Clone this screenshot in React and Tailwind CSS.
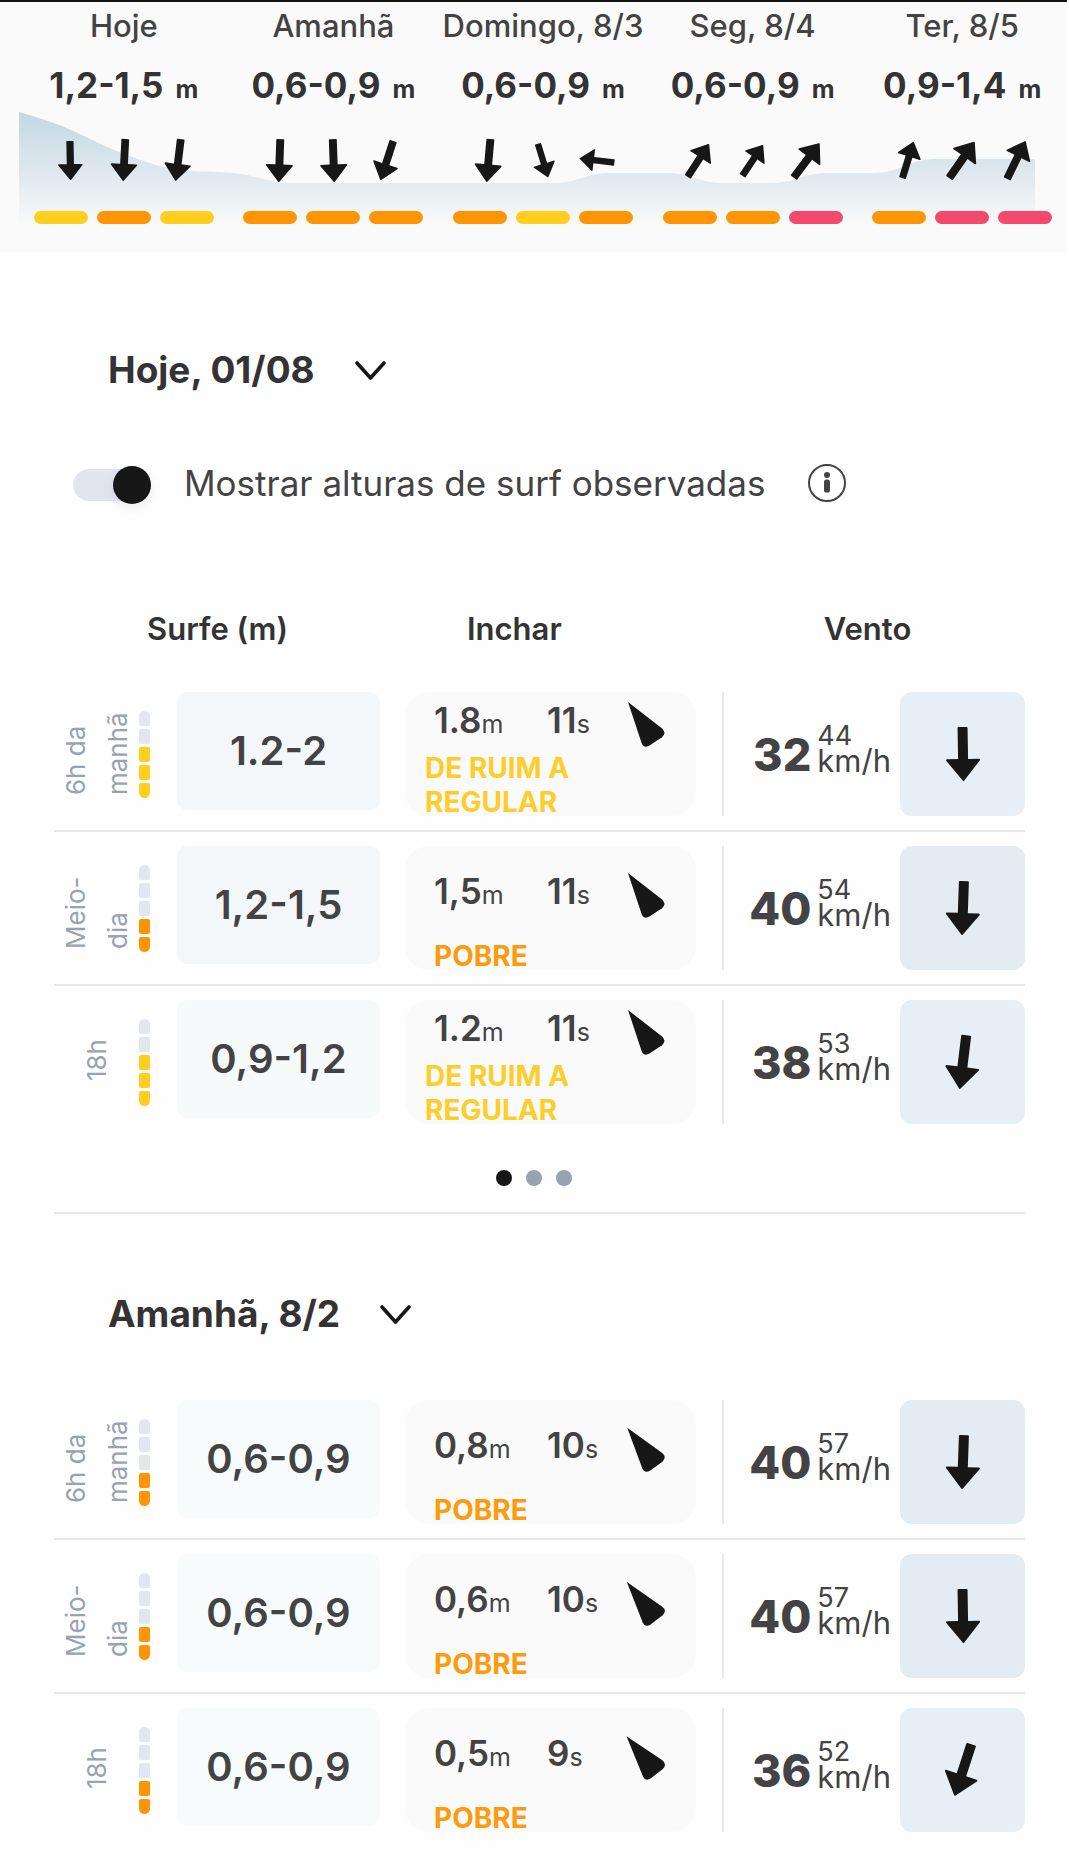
import { useState } from "react";

const COLORS = {
  yellow: { bg: "bg-[#ffce1f]", text: "text-[#fdcd2b]" },
  orange: { bg: "bg-[#ff9500]", text: "text-[#fc9a10]" },
  pink: { bg: "bg-[#f4496d]", text: "text-[#f4496d]" },
};

const DAYS = [
  {
    label: "Hoje",
    range: "1,2-1,5",
    winds: [[39, -1], [42, 3], [42, 7]],
    ratings: ["yellow", "orange", "yellow"],
  },
  {
    label: "Amanhã",
    range: "0,6-0,9",
    winds: [[43, 2], [43, -2], [41, 18]],
    ratings: ["orange", "orange", "orange"],
  },
  {
    label: "Domingo, 8/3",
    range: "0,6-0,9",
    winds: [[43, 5], [35, -17], [35, 97]],
    ratings: ["orange", "yellow", "orange"],
  },
  {
    label: "Seg, 8/4",
    range: "0,6-0,9",
    winds: [[39, 213], [37, 214], [43, 217]],
    ratings: ["orange", "orange", "pink"],
  },
  {
    label: "Ter, 8/5",
    range: "0,9-1,4",
    winds: [[38, 197], [44, 215], [42, 206]],
    ratings: ["orange", "pink", "pink"],
  },
];

const TODAY = [
  { time: "6h da manhã", surf: "1.2-2", surfBg: "bg-[#f3f7fa]", swell: "1.8", period: "11", swellDir: 0, rating: "De ruim a regular", color: "yellow", score: 3, wind: 32, gust: 44, windDir: -1, windBg: "bg-[#e6eff5]" },
  { time: "Meio-dia", surf: "1,2-1,5", surfBg: "bg-[#f3f7fa]", swell: "1,5", period: "11", swellDir: 0, rating: "Pobre", color: "orange", score: 2, wind: 40, gust: 54, windDir: 2, windBg: "bg-[#e3ecf1]" },
  { time: "18h", surf: "0,9-1,2", surfBg: "bg-[#f7fafb]", swell: "1.2", period: "11", swellDir: 0, rating: "De ruim a regular", color: "yellow", score: 3, wind: 38, gust: 53, windDir: 7, windBg: "bg-[#e6eff5]" },
];

const TOMORROW = [
  { time: "6h da manhã", surf: "0,6-0,9", surfBg: "bg-[#f7fbfc]", swell: "0,8", period: "10", swellDir: -2, rating: "Pobre", color: "orange", score: 2, wind: 40, gust: 57, windDir: 2, windBg: "bg-[#e3ecf2]" },
  { time: "Meio-dia", surf: "0,6-0,9", surfBg: "bg-[#f7fbfc]", swell: "0,6", period: "10", swellDir: -3, rating: "Pobre", color: "orange", score: 2, wind: 40, gust: 57, windDir: -1, windBg: "bg-[#e3ecf2]" },
  { time: "18h", surf: "0,6-0,9", surfBg: "bg-[#f7fbfc]", swell: "0,5", period: "9", swellDir: -4, rating: "Pobre", color: "orange", score: 2, wind: 36, gust: 52, windDir: 18, windBg: "bg-[#e6eff5]" },
];

function WindArrow({ size, deg }) {
  return (
    <svg
      viewBox="0 0 34 54"
      height={size}
      className="shrink-0 overflow-visible fill-[#171717]"
      style={{ transform: `rotate(${deg}deg)` }}
      aria-hidden="true"
    >
      <path d="M13 0h8a1 1 0 0 1 1 1v31h11a1 1 0 0 1 .8 1.6L17.8 53.6a1 1 0 0 1-1.6 0L.2 33.6A1 1 0 0 1 1 32h11V1a1 1 0 0 1 1-1z" />
    </svg>
  );
}

function SwellArrow({ deg }) {
  return (
    <svg
      viewBox="0 0 37 45"
      className="mt-1.5 h-[45px] w-[37px] shrink-0 overflow-visible fill-[#171717]"
      style={{ transform: `rotate(${deg}deg)` }}
      aria-hidden="true"
    >
      <path d="M0 0L33.8 26.2Q39 30.5 34 35.2L21.5 43.6Q15.8 46.8 13.6 41z" />
    </svg>
  );
}

function Wave() {
  return (
    <svg
      viewBox="0 0 1016 116"
      preserveAspectRatio="none"
      className="absolute top-[108px] left-[19px] h-[116px] w-[calc(100%-51px)]"
      aria-hidden="true"
    >
      <defs>
        <linearGradient id="wave" gradientUnits="userSpaceOnUse" x1="0" y1="0" x2="0" y2="116">
          <stop offset="0" stopColor="#c1d7e1" />
          <stop offset="0.62" stopColor="#e3ebf0" />
          <stop offset="1" stopColor="#fafafa" />
        </linearGradient>
      </defs>
      <path
        fill="url(#wave)"
        d="M0 2C17 7 34 12 50 19C74 30 95 41 119 49C136 55 152 60 169 61C185 62 201 61 222 64C240 67 254 73 274 73H535C560 73 565 63 590 63H648C672 63 680 73 704 73H752C778 73 782 63 808 63H855C880 63 888 50 915 49H1016V116H0Z"
      />
    </svg>
  );
}

function DayColumn({ label, range, winds, ratings }) {
  return (
    <div className="flex flex-col items-center">
      <p className="text-[31px] leading-8 font-medium whitespace-nowrap text-[#434343]">{label}</p>
      <p className="mt-[23px] flex h-10 items-baseline gap-3 text-[35px] leading-10 font-bold whitespace-nowrap text-[#333]">
        {range} <span className="text-[25px] leading-none">m</span>
      </p>
      <div className="mt-[30px] flex h-[50px]">
        {winds.map(([size, deg], i) => (
          <span key={i} className="flex w-[54px] items-center justify-center">
            <WindArrow size={size} deg={deg} />
          </span>
        ))}
      </div>
      <div className="mt-[26px] flex w-full justify-center gap-[9px]">
        {ratings.map((rating, i) => (
          <span key={i} className={`h-[13px] w-[54px] rounded-full ${COLORS[rating].bg}`} />
        ))}
      </div>
    </div>
  );
}

function DayHeading({ children }) {
  return (
    <h2 className="ml-[108px] text-[37px] leading-[44px] font-bold text-[#333]">
      <button type="button" className="flex items-center gap-10">
        {children}
        <svg
          viewBox="0 0 31 19"
          className="h-[19px] w-[31px] fill-none stroke-[#171717] stroke-[3.6]"
          strokeLinecap="round"
          strokeLinejoin="round"
          aria-hidden="true"
        >
          <path d="M2 2l13.5 15L29 2" />
        </svg>
      </button>
    </h2>
  );
}

function ScoreBar({ score, color }) {
  return (
    <div className="flex flex-col gap-[3px] overflow-hidden rounded-full">
      {[5, 4, 3, 2, 1].map((n) => (
        <span key={n} className={`h-[15px] w-[11px] rounded-xs ${n <= score ? COLORS[color].bg : "bg-[#e3e6ee]"}`} />
      ))}
    </div>
  );
}

function ForecastRow({ row }) {
  const twoLines = row.rating.length > 10;
  return (
    <tr className="border-b-2 border-[#e7e8ec] last:border-b-0">
      <td className="py-[14px]">
        <div className="flex h-[124px] items-center">
          <div className="flex w-[85px] items-center justify-center pb-1">
            <span className="max-h-[86px] rotate-180 text-[26px] leading-[42px] text-[#98a2b0] [writing-mode:vertical-rl]">
              {row.time}
            </span>
          </div>
          <ScoreBar score={row.score} color={row.color} />
        </div>
      </td>
      <td className="py-[14px] pr-[25px] align-top">
        <div className={`flex h-[118px] items-center justify-center rounded-[10px] text-[40px] font-semibold text-[#434343] ${row.surfBg}`}>
          {row.surf}
        </div>
      </td>
      <td className="py-[14px] pr-[26px]">
        <div className="flex h-[124px] flex-col rounded-3xl bg-[#fafafa]">
          <div className="flex flex-1 items-center pl-[29px] text-[35px] leading-10 font-semibold text-[#434343]">
            <span className="w-[113px]">
              {row.swell}
              <span className="text-[25px] font-normal">m</span>
            </span>
            <span className="w-[81px]">
              {row.period}
              <span className="text-[25px] font-normal">s</span>
            </span>
            <SwellArrow deg={row.swellDir} />
          </div>
          <p className={`-mb-[3px] text-[28px] leading-[34px] font-bold uppercase ${COLORS[row.color].text} ${twoLines ? "pr-[100px] pl-5" : "pl-[29px]"}`}>
            {row.rating}
          </p>
        </div>
      </td>
      <td className="py-[14px]">
        <div className="flex h-[124px] items-center justify-end border-l-2 border-[#e7e8ec] pr-[9px] pb-2">
          <div className="flex items-end gap-1.5 text-[#434343]">
            <span className="text-[45px] leading-[44px] font-extrabold">{row.wind}</span>
            <span className="flex flex-col pb-1 leading-[25px]">
              <span className="text-[27px]">{row.gust}</span>
              <span className="text-[31px]">km/h</span>
            </span>
          </div>
        </div>
      </td>
      <td className="py-[14px]">
        <div className={`flex h-[124px] items-center justify-center rounded-xl ${row.windBg}`}>
          <WindArrow size={54} deg={row.windDir} />
        </div>
      </td>
    </tr>
  );
}

function ForecastTable({ rows, header }) {
  return (
    <table className="w-full table-fixed border-collapse">
      <colgroup>
        <col className="w-[123px]" />
        <col className="w-[228px]" />
        <col className="w-[317px]" />
        <col className="w-[178px]" />
        <col className="w-[125px]" />
      </colgroup>
      {header && (
        <thead>
          <tr className="h-[69px] align-top text-[31px] leading-10 text-[#333]">
            <th colSpan={2} className="pr-6 font-semibold">Surfe (m)</th>
            <th className="pl-[62px] text-left font-semibold">Inchar</th>
            <th colSpan={2} className="pr-3 font-semibold">Vento</th>
          </tr>
        </thead>
      )}
      <tbody>
        {rows.map((row) => (
          <ForecastRow key={row.time} row={row} />
        ))}
      </tbody>
    </table>
  );
}

export default function App() {
  const [observed, setObserved] = useState(true);
  const [page, setPage] = useState(0);

  return (
    <main className="min-h-screen bg-[#fefefe] pb-2 font-['Inter',sans-serif]">
      <header className="relative mr-0.5 border-t-2 border-[#111] bg-[#fafafa] pt-2 pb-7 pl-[19px]">
        <Wave />
        <div className="relative grid grid-cols-5">
          {DAYS.map((day) => (
            <DayColumn key={day.label} {...day} />
          ))}
        </div>
      </header>

      <section className="pt-24">
        <DayHeading>Hoje, 01/08</DayHeading>

        <div className="mt-[73px] ml-[73px] flex h-10 items-center">
          <input
            id="observed"
            type="checkbox"
            role="switch"
            checked={observed}
            onChange={(e) => setObserved(e.target.checked)}
            className="flex h-8 w-[78px] shrink-0 appearance-none items-center rounded-full bg-[#e2e5ed] before:size-[38px] before:rounded-full before:bg-[#171717] before:shadow-[0_4px_12px_rgba(0,0,0,0.08)] checked:justify-end"
          />
          <label htmlFor="observed" className="pb-1 pl-[33px] text-[35px] leading-10 text-[#434343]">
            Mostrar alturas de surf observadas
          </label>
          <button type="button" aria-label="Informações" className="mb-1 ml-[43px]">
            <svg viewBox="0 0 38 38" className="size-[38px]" aria-hidden="true">
              <circle cx="19" cy="19" r="18" fill="none" stroke="#434343" strokeWidth="2" />
              <circle cx="19" cy="11" r="3" fill="#434343" />
              <rect x="16" y="15.5" width="6" height="13" rx="2.6" fill="#434343" />
            </svg>
          </button>
        </div>

        <div className="mt-[104px] mr-11 ml-[54px] border-b-2 border-[#e4e6ec]">
          <ForecastTable rows={TODAY} header />
          <div className="flex justify-center gap-[14px] pt-8 pr-3 pb-[26px]">
            {[0, 1, 2].map((n) => (
              <button
                key={n}
                type="button"
                aria-label={`Página ${n + 1}`}
                onClick={() => setPage(n)}
                className={`size-4 rounded-full ${n === page ? "bg-[#171717]" : "bg-[#98a2b0]"}`}
              />
            ))}
          </div>
        </div>
      </section>

      <section className="pt-[78px]">
        <DayHeading>Amanhã, 8/2</DayHeading>
        <div className="mt-[50px] mr-11 ml-[54px]">
          <ForecastTable rows={TOMORROW} />
        </div>
      </section>
    </main>
  );
}
